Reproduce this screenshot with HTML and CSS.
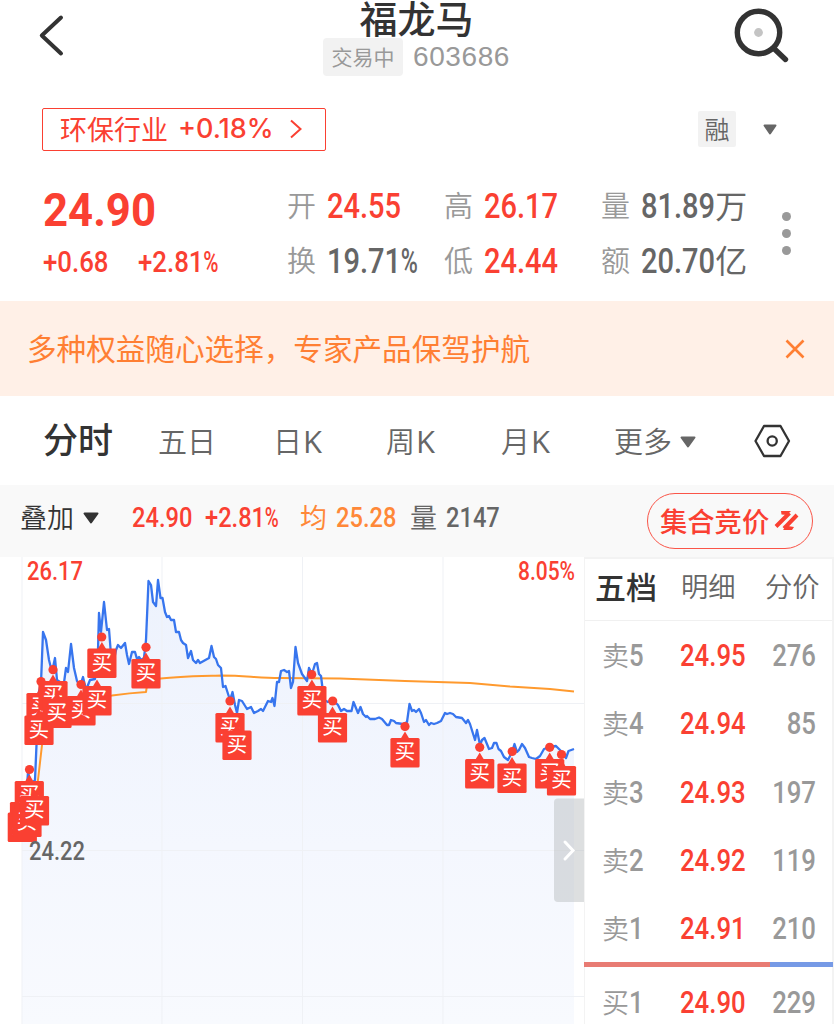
FILE: index.html
```html
<!DOCTYPE html>
<html lang="zh-CN">
<head>
<meta charset="utf-8">
<title>福龙马 603686</title>
<link rel="stylesheet" href="styles.css">
</head>
<body>
<div class="app">
  <header class="header">
    <svg class="back" width="30" height="46" viewBox="0 0 30 46"><path d="M23 4.500 3.800 22.500 23 40.500"/></svg>
    <div class="heading">
      <h1 class="name">福龙马</h1>
      <div class="sub"><span class="status">交易中</span><span class="code">603686</span></div>
    </div>
    <svg class="search" width="58" height="58" viewBox="0 0 58 58"><circle class="ring" cx="25.500" cy="26.500" r="21.200"/><path class="ring" d="M41.500 43 52.500 53.500"/><circle class="lens" cx="25.500" cy="26.500" r="4.400"/></svg>
  </header>

  <div class="industry-row">
    <a class="industry">环保行业<span class="industry-pct">+0.18%</span><svg width="14" height="22" viewBox="0 0 14 22"><path d="M2 2.500 11.500 11 2 19.500"/></svg></a>
    <span class="margin-tag">融</span>
    <svg class="caret" width="14" height="11" viewBox="0 0 14 11"><path d="M1.500 1.500H12.500L7 9.500Z"/></svg>
  </div>

  <section class="quote">
    <div class="price">
      <div class="last"><b class="num">24.90</b></div>
      <div class="changes"><span class="num">+0.68</span><span class="num">+2.81<span class="pct">%</span></span></div>
    </div>
    <dl class="stats">
      <dt>开</dt><dd class="up"><span class="num">24.55</span></dd>
      <dt>高</dt><dd class="up"><span class="num">26.17</span></dd>
      <dt>量</dt><dd><span class="num">81.89</span><span class="unit">万</span></dd>
      <dt>换</dt><dd><span class="num">19.71<span class="pct">%</span></span></dd>
      <dt>低</dt><dd class="up"><span class="num">24.44</span></dd>
      <dt>额</dt><dd><span class="num">20.70</span><span class="unit">亿</span></dd>
    </dl>
    <div class="dots"><i></i><i></i><i></i></div>
  </section>

  <div class="banner"><span>多种权益随心选择，专家产品保驾护航</span><svg width="20" height="20" viewBox="0 0 20 20"><path d="M1.500 1.500 18.500 18.500M18.500 1.500 1.500 18.500"/></svg></div>

  <nav class="tabs">
    <span class="tab active">分时</span><span class="tab">五日</span><span class="tab">日<em>K</em></span><span class="tab">周<em>K</em></span><span class="tab">月<em>K</em></span><span class="tab">更多<svg width="16" height="12" viewBox="0 0 16 12"><path d="M1.500 1.500H14.500L8 10.500Z"/></svg></span>
    <svg class="settings" width="38" height="34" viewBox="0 0 38 34"><path d="M10 2H26.500L35 17 26.500 32H10L1.500 17Z"/><circle cx="18.200" cy="17" r="4.600"/></svg>
  </nav>

  <div class="toolbar">
    <span class="overlay">叠加<svg width="16" height="12" viewBox="0 0 16 12"><path d="M1.500 1.500H14.500L8 10.500Z"/></svg></span>
    <span class="t-price"><span class="num">24.90</span></span>
    <span class="t-pct"><span class="num">+2.81<span class="pct">%</span></span></span>
    <span class="t-avg">均<span class="num">25.28</span></span>
    <span class="t-vol">量<span class="num">2147</span></span>
    <a class="auction"><span>集合竞价</span><svg width="25" height="20" viewBox="0 0 25 20"><path d="M7 0H17L13 4 7.500 3.500ZM8 14 12.500 15 9 19H18L20 16Z"/><path class="bar" d="M15.500 2 2 15.500M23 4 10 17.500"/></svg></a>
  </div>

  <main class="body">
    <svg class="chart" viewBox="0 557 584 467" width="584" height="467">
      <defs>
        <linearGradient id="shade" x1="0" y1="0" x2="0" y2="1"><stop offset="0" stop-color="#edf2fd"/><stop offset=".6" stop-color="#f4f7fe"/><stop offset="1" stop-color="#f8fafe"/></linearGradient>
        <g id="buy"><path d="M0 -6.500 4.500 1H-4.500Z"/><rect x="-14.600" y="0" width="29.200" height="29.500" rx="1.500"/><text x="0" y="21.300">买</text></g>
      </defs>
      <path fill="url(#shade)" d="M22 1024V825L29 773 35 780 37 745 37 700 41 683 43 632 46 640 49 660 52 672 55 658 57 680 60 682 63 690 66 668 68 672 71 644 74 668 77 681 80 686 83 677 86 690 90 680 95 679 98 650 99 613 101 632 104 602 107 630 109 629 111 655 114 660 118 645 121 648 125 643 129 664 132 652 135 652 138 659 144 658 146 640 148 581 151 585 153 602 156 606 158 580 160 597 162 598 165 612 167 617 174 620 176 632 179 633 183 643 186 645 188 658 191 651 193 660 196 663 200 663 209 658 211 646 214 657 218 665 221 668 223 687 226 686 230 700 232 692 235 705 237 713 239 700 242 701 247 709 251 707 254 713 263 711 268 701 273 698 274 706 277 682 279 682 281 671 289 671 291 688 293 682 295 647 298 663 302 674 307 681 309 668 312 674 315 664 317 663 319 674 321 676 324 700 333 700 338 705 341 711 351 711 354 702 358 713 361 707 366 717 375 719 382 719 387 725 391 720 396 723 407 724 409.500 704 412 711 419 709 424 722 431 724 441 721 445 713 453 714 462 718 470 724 475 740 477 730 480 745 484 738 489 749 494 743 501 751 508 760 514 744 517 752 522 744 529 757 536 759 544 749 556 746 566 758 568 751 574 749V1024Z"/>
      <path class="grid" d="M22 557V1024M162 557V1024M302.500 557V1024M443 557V1024M22 703.500H584M22 850.500H584M22 996.500H584"/>
      <path class="average" d="M30 815 38 780 42 745 43 715C60 703 85 698 112 695.500Q130 693 146 692L147.500 682 153 679.500C175 676 205 676 222 675.500 245 675.500 257 678 280 678L340 678.500 405 681 470 683 510 686.500 550 689 574 691.500"/>
      <path class="line" d="M25 815 28 772 31 784 35 780 36.500 745 37 700 41 683 43 632 46 640 49 660 52 672 55 658 57 680 60 682 63 690 66 668 68 672 71 644 74 668 77 681 80 686 83 677 86 690 90 680 95 679 98 650 99 613 101 632 104 602 107 630 109 629 111 655 114 660 116 650 118 645 121 648 125 643 127 655 129 664 132 652 135 652 137 659 139 657 141 660 144 658 146 640 148.500 581 151 585 153 602 156 606 158 580 160.500 598 162.500 598 165 612 167 617 169 616 171 620 174 620 176 632 179 632 181 640 183 643 186 645 188 658 191 651 193 660 196 663 198 660 200 663 209 658 211.500 646 214 657 216 659 218 665 221 668 223 687 225.500 686 230 700 232.500 692 235 705 237 713 239 700 242 701 247 709 251 707 254 713 258 711 261 709 263 711 268 701 271 702 272.500 698 274.500 706 277 682 279 682 281 671 284 670 287 672 289 671 291 688 293 682 295.500 647 298 663 302 674 307 681 309 668 312 674 315 664 317 663 319 674 321 676 324 700 328 702 333 700 338 705 341 711 344 709 347 711 351.500 711 353.500 702 358 713 360.500 707 363 714 366 717 367 716 370 719 375 719 379 717.500 382 719 387 725 389 725 391 720 394 721 396 723 403 724 407 722 409.500 704 412 711 414 710 416 712 419 709 421 713 424 722 426 720 429 725 431 723 434 724 437 723 441 721 445 713 447 714 450 713 453 714 456 717 462 718 466 723 468 720 470 724 475 740 477 730 480 745 482 740 484.500 738 489 749 492 748 494 743 496.500 743 498.500 749 501 751 504 757 508 760 512 752 514.500 744 517 752 519 750 522 744 525 748 529 757 532 758 536 759 540 756 544 749 550 747 556 746 561 751 566 758 568.500 751 574 749"/>
      <g class="marks">
        <g><circle cx="29.500" cy="769.500" r="4.600"/><circle cx="41" cy="681.500" r="4.600"/><circle cx="53" cy="669.700" r="4.600"/><circle cx="81" cy="684.500" r="4.600"/><circle cx="101.700" cy="637" r="4.600"/><circle cx="146" cy="647.300" r="4.600"/><circle cx="230" cy="701" r="4.600"/><circle cx="311.700" cy="674.500" r="4.600"/><circle cx="332.700" cy="701" r="4.600"/><circle cx="405" cy="726.500" r="4.600"/><circle cx="479.700" cy="747.300" r="4.600"/><circle cx="512.200" cy="751.500" r="4.600"/><circle cx="549.700" cy="747.300" r="4.600"/><circle cx="561.500" cy="754.500" r="4.600"/></g>
        <use href="#buy" x="24.500" y="802"/><use href="#buy" x="22.300" y="812.500"/><use href="#buy" x="27" y="807.500"/><use href="#buy" x="29.300" y="781"/><use href="#buy" x="34.500" y="796"/>
        <use href="#buy" x="41" y="693"/><use href="#buy" x="53" y="681"/><use href="#buy" x="39" y="715.500"/><use href="#buy" x="57" y="698.500"/><use href="#buy" x="81" y="696"/><use href="#buy" x="97" y="686"/><use href="#buy" x="101.900" y="648.500"/>
        <use href="#buy" x="146" y="659"/><use href="#buy" x="230" y="713"/><use href="#buy" x="237" y="730.500"/><use href="#buy" x="311.900" y="686"/><use href="#buy" x="332.500" y="713"/><use href="#buy" x="405" y="738"/><use href="#buy" x="479.700" y="759"/><use href="#buy" x="512" y="763.500"/><use href="#buy" x="549.700" y="759"/><use href="#buy" x="561.500" y="766"/>
      </g>
      <g class="scale"><text class="hi" x="27" y="579.500" textLength="56" lengthAdjust="spacingAndGlyphs">26.17</text><text class="hi" x="518" y="579.500" textLength="57" lengthAdjust="spacingAndGlyphs">8.05%</text><text x="29" y="860" textLength="56" lengthAdjust="spacingAndGlyphs">24.22</text></g>
      <g class="drawer"><path class="handle" d="M584 798.500H558Q554 798.500 554 802.500V898Q554 902 558 902H584Z"/><path class="chev" d="M565 842 573 850.500 565 859"/></g>
    </svg>

    <aside class="book">
      <div class="book-tabs"><span class="on">五档</span><span>明细</span><span>分价</span></div>
      <div class="row"><span>卖<i class="num">5</i></span><b class="num">24.95</b><span class="vol num">276</span></div>
      <div class="row"><span>卖<i class="num">4</i></span><b class="num">24.94</b><span class="vol num">85</span></div>
      <div class="row"><span>卖<i class="num">3</i></span><b class="num">24.93</b><span class="vol num">197</span></div>
      <div class="row"><span>卖<i class="num">2</i></span><b class="num">24.92</b><span class="vol num">119</span></div>
      <div class="row"><span>卖<i class="num">1</i></span><b class="num">24.91</b><span class="vol num">210</span></div>
      <div class="ratio"><i class="sell"></i><i class="buy"></i></div>
      <div class="row bid"><span>买<i class="num">1</i></span><b class="num">24.90</b><span class="vol num">229</span></div>
    </aside>
  </main>
</div>
</body>
</html>
```
FILE: styles.css
```css
* { box-sizing: border-box; }
body {
  margin: 0;
  background: #fff;
  color: #333;
  font-family: "Noto Sans CJK SC", sans-serif;
  font-weight: 350;
}
svg { display: block; flex: none; fill: none; }
i, em { font-style: normal; }
.app { width: 834px; height: 1024px; overflow: hidden; }

/* Narrow numerals */
.num {
  display: inline-block;
  font-family: Roboto, sans-serif;
  font-weight: 500;
  transform: scaleX(.83);
  transform-origin: 0 50%;
  white-space: nowrap;
}
.pct { display: inline-block; transform: scaleX(.8); transform-origin: 0 50%; }

.header { display: flex; justify-content: space-between; height: 80px; padding: 0 43px 0 38px; }
.back { margin-top: 13px; stroke: #333; stroke-width: 4; stroke-linecap: round; stroke-linejoin: round; }
.heading { display: flex; flex-direction: column; align-items: center; padding-left: 32px; }
.name { margin: 0; height: 38px; font-size: 38px; line-height: 34px; font-weight: 500; }
.sub { display: flex; align-items: center; gap: 10px; color: #999; }
.status { width: 80px; height: 38px; border-radius: 4px; background: #f2f2f2; font-size: 21px; line-height: 36px; text-align: center; font-weight: 400; }
.code { font-family: "Liberation Sans", sans-serif; font-size: 28px; letter-spacing: .6px; }
.search { margin-top: 6px; }
.ring { stroke: #333; stroke-width: 5.400; stroke-linecap: round; }
.lens { fill: #c4c4c4; }

.industry-row { display: flex; align-items: center; height: 71px; padding: 27px 57px 0 42px; }
.industry { display: flex; align-items: center; width: 284px; height: 43px; padding-left: 17px; border: 1.500px solid #fa4032; border-radius: 2px; color: #fa4032; font-size: 27px; line-height: 40px; font-weight: 400; }
.industry svg { margin-left: 15px; stroke: #fa4032; stroke-width: 2; }
.industry-pct { margin-left: 10px; font-family: Inter, sans-serif; font-size: 27px; font-weight: 500; }
.margin-tag { width: 38px; height: 36px; margin-left: auto; background: #f2f2f2; border-radius: 2px; color: #666; font-size: 25px; line-height: 34px; text-align: center; }
.caret { margin-left: 27px; fill: #666; stroke: #666; stroke-width: 2; stroke-linejoin: round; }

.quote { display: flex; height: 150px; padding: 28px 42px 0 43px; }
.price { width: 244px; color: #fa4032; }
.last { height: 56px; font-size: 47px; line-height: 54px; }
.last .num { font-weight: 700; transform: scaleX(.93); }
.changes { display: flex; height: 54px; font-size: 30px; line-height: 54px; }
.changes .num { width: 95px; transform: scaleX(.86); }
.stats { display: grid; grid-template-columns: 40px 117px 40px 117px 40px 110px; grid-template-rows: 55px 55px; margin: 0; line-height: 55px; }
.stats dt { color: #999; font-size: 29px; line-height: 51px; }
.stats dd { display: flex; margin: 0; color: #666; font-size: 35px; }
.stats dd.up { color: #fa4032; }
.unit { margin-left: -15px; font-size: 32px; line-height: 50px; font-weight: 400; }
.dots { display: flex; flex-direction: column; gap: 8px; margin: 33px 0 0 31px; }
.dots i { width: 9px; height: 9px; border-radius: 50%; background: #999; }

.banner { display: flex; align-items: center; justify-content: space-between; height: 95px; padding: 0 29px 0 27px; background: #fff0e7; color: #ff7f33; font-size: 29.600px; font-weight: 400; }
.banner span { margin-top: -3px; }
.banner svg { stroke: #ff7f33; stroke-width: 2.600; }

.tabs { display: grid; grid-template-columns: 115px 115px 113px 115px 113px 140px 38px; align-items: center; height: 89px; padding: 0 0 0 43px; color: #666; font-size: 29px; }
.tab { display: flex; align-items: center; margin-top: -2px; line-height: 60px; white-space: nowrap; }
.tab em { padding-top: 2px; font-family: "Open Sans", sans-serif; font-weight: 400; font-size: 31px; margin-left: 1px; }
.tab svg { margin: 4px 0 0 8px; fill: #666; stroke: #666; stroke-width: 2; stroke-linejoin: round; }
.tab.active { margin-top: -5px; color: #333; font-size: 35px; font-weight: 500; }
.settings { stroke: #333; stroke-width: 2.300; stroke-linejoin: round; }

.toolbar { display: grid; grid-template-columns: 112px 73px 95px 110px 237px 166px; align-items: center; height: 72px; padding-left: 20px; background: #f9f9f9; font-size: 27px; }
.toolbar .num { font-size: 28.500px; }
.toolbar > span { display: flex; align-items: center; height: 60px; margin-top: -9px; }
.toolbar > span .num { padding-top: 2px; }
.overlay svg { margin: 3px 0 0 9px; fill: #333; stroke: #333; stroke-width: 2; stroke-linejoin: round; }
.t-price, .t-pct { color: #fa4032; }
.t-avg { color: #ff8838; font-weight: 400; }
.t-vol { color: #666; font-weight: 400; }
.t-avg .num, .t-vol .num { margin-left: 9px; }
.auction { display: flex; align-items: center; width: 166px; height: 56px; padding-left: 12px; border: 1.500px solid #fa5548; border-radius: 28px; color: #fa4032; font-size: 27.300px; font-weight: 500; white-space: nowrap; }
.auction span { margin-top: -3px; }
.auction svg { margin-left: 5px; fill: #fa4032; }
.auction .bar { stroke: #fa4032; stroke-width: 4; }

.body { display: flex; height: 467px; }
.grid { stroke: #eff1f5; stroke-width: 1; }
.average { stroke: #ff9a2e; stroke-width: 2; stroke-linejoin: round; }
.line { stroke: #3775ee; stroke-width: 2.300; stroke-linejoin: round; }
.marks { fill: #fa4032; }
.marks text, #buy text { fill: #fff; font-size: 20.500px; font-weight: 400; text-anchor: middle; }
.scale { font-family: Roboto, sans-serif; font-size: 25px; font-weight: 500; fill: #666; }
.scale .hi { fill: #fa4032; }
.handle { fill: #bbc0c2; fill-opacity: .5; }
.chev { stroke: #fff; stroke-width: 3; stroke-linecap: round; }

.book { width: 250px; border: solid #f3f3f3; border-width: 2px 2px 0 1px; color: #999; }
.book-tabs { display: flex; height: 62px; padding-left: 10px; border-bottom: 1px solid #f0f0f0; color: #666; font-size: 27.300px; line-height: 53px; white-space: nowrap; }
.book-tabs span { width: 84px; }
.book-tabs .on { width: 86px; color: #333; font-size: 31px; font-weight: 500; }
.book-tabs span:last-child { width: 56px; }
.row { display: grid; grid-template-columns: 78px 62px 74px; height: 68.300px; padding-left: 17px; font-size: 27px; line-height: 70px; }
.row .num { font-size: 31px; }
.row b { color: #fa4032; }
.row .vol { transform-origin: 100% 50%; text-align: right; }
.row > span:first-child { line-height: 68px; }
.ratio { display: flex; height: 5px; margin: 0 -1px 0 -1px; }
.ratio .sell { width: 186px; background: #e87b73; }
.ratio .buy { flex: 1; background: #769ae6; }
.bid { height: 61px; line-height: 71px; }
.bid > span:first-child { line-height: 69px; }
```
